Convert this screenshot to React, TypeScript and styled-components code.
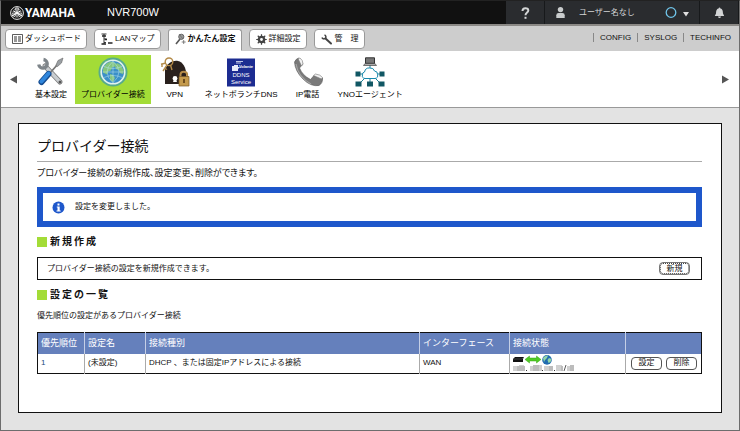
import React from "react";
import styled, { createGlobalStyle } from "styled-components";

const GlobalStyle = createGlobalStyle`
  * { box-sizing: border-box; }
  body {
    margin: 0;
    background: #e3e3e3;
    color: #111;
    font: 8px/12px "Liberation Sans", "Noto Sans CJK JP", sans-serif;
  }
  button { font: inherit; color: inherit; margin: 0; cursor: pointer; }
  h1, h2, p { margin: 0; }
  a { color: inherit; text-decoration: none; }
`;

const Page = styled.div`
  min-height: 100vh;
  border: 1px solid #6d6d6d;
  border-top-color: #222;
`;

const TopBar = styled.header`
  display: flex;
  height: 25px;
  background: #111;
  border-bottom: 2px solid #8b8986;
  color: #fff;
`;

const Brand = styled.div`
  display: flex;
  align-items: center;
  gap: 1px;
  width: 97px;
  padding-left: 9px;
  font: bold 12px/14px Roboto, "Liberation Sans", sans-serif;
`;

const Model = styled.div`
  flex: 1;
  padding-left: 9px;
  font-size: 11px;
  line-height: 22px;
`;

const TopButton = styled.button<{ $wide?: boolean }>`
  display: flex;
  align-items: center;
  justify-content: ${(p) => (p.$wide ? "flex-start" : "center")};
  width: ${(p) => (p.$wide ? "155px" : "39px")};
  padding: 0 ${(p) => (p.$wide ? "6px 0 10px" : "0")};
  border: 0;
  border-right: 1px solid #17191b;
  background: #2a2c2f;
  color: #d3d5d6;
`;

const UserName = styled.span`
  flex: 1;
  padding-left: 13px;
  text-align: left;
`;

const TabBar = styled.div`
  display: flex;
  justify-content: space-between;
  height: 25px;
  padding: 0 8px 0 4px;
  background: #cdcdcd;
`;

const Tabs = styled.nav`
  display: flex;
  align-items: flex-start;
  gap: 7px;
  padding-top: 3px;
`;

const Tab = styled.button<{ $active?: boolean }>`
  display: flex;
  align-items: center;
  gap: 2px;
  height: ${(p) => (p.$active ? "22px" : "20px")};
  padding: 0 5px 0 6px;
  padding-bottom: ${(p) => (p.$active ? "3px" : "0")};
  background: #fff;
  border: 1px solid #999;
  border-bottom-color: ${(p) => (p.$active ? "#fff" : "#999")};
  border-radius: ${(p) => (p.$active ? "3px 3px 0 0" : "4px")};
  font-weight: ${(p) => (p.$active ? "bold" : "normal")};
  white-space: pre;
`;

const Links = styled.nav`
  display: flex;
  align-items: center;
  padding-bottom: 3px;
`;

const TopLink = styled.a`
  padding: 0 6px;
  line-height: 9px;
  border-left: 1px solid #888;
  &:last-child { padding-right: 0; }
`;

const IconBar = styled.nav`
  display: flex;
  align-items: center;
  height: 57px;
  padding: 0 9px 0 8px;
  background: #fff;
  border-bottom: 1px solid #999;
`;

const Arrow = styled.button`
  display: flex;
  padding: 0;
  border: 0;
  background: none;
`;

const Items = styled.div`
  display: flex;
  flex: 1;
  gap: 1px;
  padding-left: 11px;
`;

const Item = styled.a<{ $active?: boolean }>`
  display: flex;
  flex-direction: column;
  align-items: center;
  gap: 2px;
  min-width: 46px;
  height: 49px;
  padding: 2px 6px 0;
  background: ${(p) => (p.$active ? "#a3dc37" : "transparent")};
  color: #000;
`;

const Panel = styled.main`
  margin: 15px 17px 17px;
  padding: 0 19px 38px 18px;
  background: #fff;
  border: 1px solid #111;
`;

const Title = styled.h1`
  padding: 12px 0 5px;
  border-bottom: 1px solid #aaa;
  font-size: 14px;
  font-weight: normal;
  line-height: 20px;
`;

const Description = styled.p`
  padding: 5px 0 8px;
  font-size: 9px;
  font-feature-settings: "palt";
`;

const Notice = styled.div`
  display: flex;
  align-items: center;
  gap: 10px;
  height: 40px;
  padding-left: 9px;
  border: 6px solid #1e57cb;
`;

const Heading = styled.h2`
  display: flex;
  align-items: center;
  gap: 3px;
  padding: 8px 0;
  font-size: 10px;
  line-height: 14px;
  letter-spacing: 2px;
  &::before {
    content: "";
    width: 10px;
    height: 10px;
    background: #a3dc37;
  }
`;

const CreateBox = styled.section`
  display: flex;
  align-items: center;
  justify-content: space-between;
  height: 23px;
  padding: 0 11px 0 9px;
  border: 1px solid #111;
`;

const SmallButton = styled.button<{ $focused?: boolean }>`
  width: 31px;
  height: 13px;
  padding: 0;
  background: #fff;
  border: 1px solid ${(p) => (p.$focused ? "#777" : "#555")};
  border-radius: 4px;
  line-height: 10px;
  outline: ${(p) => (p.$focused ? "1px dotted #444" : "none")};
  outline-offset: -2px;
`;

const ListNote = styled.p`
  padding-bottom: 10px;
`;

const Table = styled.table`
  width: 100%;
  table-layout: fixed;
  border-collapse: collapse;
  border: 1px solid #111;
  text-align: left;
`;

const Col = styled.col<{ $w?: number }>`
  width: ${(p) => (p.$w ? `${p.$w}px` : "auto")};
`;

const Th = styled.th`
  height: 21px;
  padding: 0 3px;
  background: #6580bc;
  color: #fff;
  font-size: 9px;
  font-weight: normal;
  & + & { border-left: 1px solid #c5cfe6; }
`;

const Td = styled.td`
  height: 20px;
  padding: 0 3px;
  vertical-align: middle;
  & + & { border-left: 1px solid #aaa; }
`;

const Serial = styled.span`
  color: #1a4a7c;
`;

const Status = styled.div`
  display: flex;
`;

const Actions = styled.div`
  display: flex;
  gap: 4px;
  justify-content: flex-end;
  padding-right: 1px;
`;

const YamahaMark = () => (
  <svg width="14" height="14" viewBox="0 0 14 14" fill="none" stroke="#fff">
    <circle cx="7" cy="7" r="6.4" strokeWidth=".9" />
    {[0, 120, 240].map((a) => (
      <g key={a} transform={`rotate(${a} 7 7)`}>
        <path d="M7 11V1" strokeWidth=".9" />
        <path d="M5.4 1.8v2.4L7 5.6l1.6-1.4V1.8" strokeWidth=".7" />
      </g>
    ))}
    <circle cx="7" cy="7" r="4.3" strokeWidth=".4" />
  </svg>
);

const HelpIcon = () => (
  <svg width="9" height="12" viewBox="0 0 9 12" fill="none" stroke="#d3d5d6" strokeWidth="2">
    <path d="M1.5 4C1.5 .3 7.3.3 7.3 3.4 7.3 5.5 4.5 5.4 4.5 8.3" />
    <path d="M4.5 9.8v2" />
  </svg>
);

const PersonIcon = () => (
  <svg width="11" height="13" viewBox="0 0 11 13" fill="#c9cccd">
    <circle cx="5.5" cy="3.6" r="2.7" />
    <path d="M1.3 12V9.2Q1.3 7 3.6 7h3.8q2.3 0 2.3 2.2V12z" />
  </svg>
);

const RingIcon = () => (
  <svg width="29" height="12" viewBox="0 0 29 12">
    <circle cx="7" cy="5.5" r="4.8" fill="none" stroke="#70c5ea" strokeWidth="1.3" />
    <path d="M19 5h6l-3 4.5z" fill="#e0e0e0" />
  </svg>
);

const BellIcon = () => (
  <svg width="11" height="12" viewBox="0 0 11 12" fill="#d3d5d6">
    <path d="M5.5.6q.8 0 .9 1C9 2.3 8.8 4.8 9 6.6L10.2 9H.8L2 6.6C2.2 4.8 2 2.3 4.6 1.6q.1-1 .9-1zM4 9.6h3q-.3 1.5-1.5 1.5T4 9.6z" />
  </svg>
);

const DashIcon = () => (
  <svg width="11" height="10" viewBox="0 0 11 10" fill="none" stroke="#333">
    <path d="M.5.5h10v9H.5z" strokeWidth=".8" />
    <path d="M2 3h3M6 3h3M2 5h3M6 5h3M2 7h3M6 7h3" strokeWidth="1.2" />
  </svg>
);

const LanIcon = () => (
  <svg width="12" height="12" viewBox="0 0 12 12" fill="none" stroke="#222">
    <path d="M.5 1h5M3 1v10M3 6h2.5M3 9.5h2" strokeWidth=".9" />
    <path d="M1 3h4M.5 11h4.5M4 6.5h2M7 10h4.500" strokeWidth="1.3" />
  </svg>
);

const WandIcon = () => (
  <svg width="11" height="12" viewBox="0 0 11 12">
    <path d="m1 11 4-5" stroke="#555" strokeWidth="1.6" />
    <circle cx="6.3" cy="3.8" r="2.6" fill="#999" stroke="#666" />
    <path d="M8.7 7v4M6.7 9h4M4 1l4 5" stroke="#666" strokeWidth=".8" />
  </svg>
);

const GearIcon = () => (
  <svg width="11" height="11" viewBox="0 0 10 10" stroke="#444" fill="none">
    <circle cx="5" cy="5" r="2.4" strokeWidth="2.2" />
    {[0, 45, 90, 135].map((a) => (
      <path key={a} d="M5 .2v2M5 7.8v2" strokeWidth="1.1" transform={`rotate(${a} 5 5)`} />
    ))}
  </svg>
);

const WrenchIcon = () => (
  <svg width="12" height="11" viewBox="0 0 12 11" fill="none" stroke="#444">
    <path d="m4.5 4.5 5.5 5" strokeWidth="2" strokeLinecap="round" />
    <path d="M3.5 1A2 2 0 1 1 1 3.5" strokeWidth="1.5" />
  </svg>
);

const Triangle = ({ right }: { right?: boolean }) => (
  <svg width="8" height="9" viewBox="0 0 8 9" fill="#555">
    <path d={right ? "M0 .5v8l7-4z" : "M8 .5v8l-7-4z"} />
  </svg>
);

const ToolsIcon = () => (
  <svg width="30" height="30" viewBox="0 0 30 30" fill="none" strokeLinecap="round">
    <path d="m9 9 15 16" stroke="#777" strokeWidth="5" />
    <path d="m9 9 15 16" stroke="#c9cdd0" strokeWidth="3.4" />
    <path d="M7.5 2.5a4.3 4.3 0 1 1-4.8 5" stroke="#7e858a" strokeWidth="3.3" strokeLinecap="butt" />
    <circle cx="24" cy="25" r="1.5" fill="#555" />
    <path d="m14 16 8-9" stroke="#777" strokeWidth="1.8" />
    <path d="m20 8 2-4.5 5-2.5-1.5 5-4 3.5z" fill="#9a9fa3" stroke="#666" strokeWidth=".6" />
    <path d="m5.500 25 7-8" stroke="#164d91" strokeWidth="6" />
    <path d="m5.500 24.500 7-8" stroke="#2f86dc" strokeWidth="3.8" />
  </svg>
);

const GlobeIcon = () => (
  <svg width="30" height="30" viewBox="0 0 30 30">
    <circle cx="15" cy="15" r="14.5" fill="#57ab8c" />
    <circle cx="15" cy="15" r="12.6" fill="#e2f2ee" />
    <circle cx="15" cy="15" r="11" fill="#3a8fc8" />
    <path d="M5 12Q7 5 14 4.4l4 2-1 3-3 1-1 3-3 1-1 3-4-2zM19 6l4 2 3 6-1 3-3-1-1-3-3-1-1-3zM12 17l3 1 2 3-2 4-3-2z" fill="#86c67f" />
    <path d="M4.5 15h21M15 4.2v21.6M15 4.2q-12 11 0 21.6 12-11 0-21.6M6 9.5q9 4 18 0M6 20.5q9-4 18 0" fill="none" stroke="#b9e4ef" strokeWidth=".5" />
  </svg>
);

const VpnIcon = () => (
  <svg width="30" height="30" viewBox="0 0 30 30">
    <path d="M5 27V13C7 6 13 3 18 4c5 1 8 7 8 12v11z" fill="#29201d" />
    <circle cx="15" cy="21.5" r="2.4" fill="#fff" />
    <path d="m13 25 2-5 2 5z" fill="#fff" />
    <g fill="none" stroke="#b48b49" strokeWidth="1.4">
      <circle cx="9" cy="4.800" r="3.800" />
      <path d="m6 6-5 1.200M2 7v3M7 8l-4 6M4.500 11l2.500 1.500M10.500 8l1.500 5" />
      <path d="M20.500 20v-2.500q0-2.800 3.300-2.800t3.300 2.800V20" strokeWidth="2" />
    </g>
    <path d="M19 19.5h10V29H19z" fill="#c49a4c" stroke="#79592a" strokeWidth=".7" />
    <path d="M24 22v4" stroke="#604018" strokeWidth="1.7" />
  </svg>
);

const DdnsIcon = () => (
  <svg width="30" height="30" viewBox="0 0 30 30">
    <path d="M1 1.5h28v28H1z" fill="#1c2c91" />
    <path d="M6 9h2V8h4v2h2l-2 2v2H6z" fill="#e7ebfa" />
    <path d="M10 4.500h7M10 6h5" stroke="#e7ebfa" strokeWidth=".8" />
    <g fill="#fff" fontFamily="Liberation Sans" textAnchor="middle">
      <text x="20" y="11" fontSize="4" fontWeight="bold">Volante</text>
      <text x="15" y="20" fontSize="6">DDNS</text>
      <text x="15" y="27" fontSize="6">Service</text>
    </g>
  </svg>
);

const PhoneIcon = () => (
  <svg width="30" height="30" viewBox="0 0 30 30">
    <path d="M1.5 5Q3 1.5 6 1l4 6-3.500 4q3 7.500 11 11.500l3.500-4 8.500 2.500q.5 5-3.500 7.500-8 1.500-16-6.500T1.500 5z" fill="#7a7a7a" stroke="#555" strokeWidth=".6" />
    <path d="m5 1.500 2-.5q3 2 3 6L8.500 9zM20.500 18.500l2-1.500q5 .5 7 3.500L28.500 22z" fill="#f2f2f2" stroke="#777" strokeWidth=".6" />
    <path d="M3 7q2 13 15 20" fill="none" stroke="#a5a5a5" strokeWidth="1.2" />
  </svg>
);

const YnoIcon = () => (
  <svg width="30" height="30" viewBox="0 0 30 30">
    <path d="M15 7v5M4 17h6M20 17h6M11 20l-7 7M15 20v6M19 20l7 7" stroke="#1d8299" strokeWidth="1" />
    <path d="M10 21.500q-3.500-.5-2.500-3.600-.5-2.400 2-2.900 1-4.500 5-4 4-.5 5 3 3.500.5 3 3.500 1 3.500-2.500 4z" fill="#fff" stroke="#1689ad" />
    <path d="M10.500.8h9v5.500h-9z" fill="#777" stroke="#333" />
    <path d="m10 6.500-1.500 2h13l-1.500-2z" fill="#aaa" stroke="#333" strokeWidth=".6" />
    <path d="M.5 14.500h5v5h-5zM24.500 14.500h5v5h-5zM.5 24.500h6v5h-6zM12 24.500h6v5h-6zM23.500 24.500h6v5h-6z" fill="#115764" />
  </svg>
);

const InfoIcon = () => (
  <svg width="13" height="13" viewBox="0 0 13 13">
    <circle cx="6.5" cy="6.5" r="6" fill="#1e57cb" />
    <path d="M5.5 2.5h2v2h-2zM4.8 5.5h2.9v4h1v1H4.500v-1h1v-3h-.7z" fill="#fff" />
  </svg>
);

const ConnectionIcon = () => (
  <svg width="64" height="17" viewBox="0 0 64 17" role="img" aria-label="接続中">
    <path d="m0 4 2-2h9l-1 2v3H0z" fill="#111" />
    <path d="M0 4h9l2-2" fill="none" stroke="#666" strokeWidth=".6" />
    <path d="m12 4.500 4.500-3.500v2h7V1L28 4.500 23.500 8V6h-7v2z" fill="#50ca24" stroke="#37a716" strokeWidth=".5" />
    <circle cx="34" cy="4.900" r="4.800" fill="#206bb0" />
    <path d="M30 3q2-3 5-2.500L34 3l-2 2-1 2zM36 3l2.500 1-1 3-2 1-1-3z" fill="#92d6a8" />
    <path d="M0 11h4v5H0zM6 10h5v6H6zM17 11h5v5h-5zM25 10h4v6h-4zM31 11h6v5h-6zM43 10h6v6h-6zM54 11h7v5h-7z" fill="#d0d0d0" />
    <path d="M4 11h8v5H4zM20 10h6v6h-6zM36 11h4v5h-4zM48 11h2v5h-2zM57 10h4v6h-4z" fill="#bcbcbc" />
    <path d="M13 15h1v1h-1zM29 15h1v1h-1zM41 15h1v1h-1z" fill="#333" />
    <path d="m51 16 2-6" stroke="#333" strokeWidth=".8" />
  </svg>
);

const tabs = [
  { label: "ダッシュボード", icon: <DashIcon /> },
  { label: "LANマップ", icon: <LanIcon /> },
  { label: "かんたん設定", icon: <WandIcon />, active: true },
  { label: "詳細設定", icon: <GearIcon /> },
  { label: "管　理", icon: <WrenchIcon /> },
];

const items = [
  { label: "基本設定", icon: <ToolsIcon /> },
  { label: "プロバイダー接続", icon: <GlobeIcon />, active: true },
  { label: "VPN", icon: <VpnIcon /> },
  { label: "ネットボランチDNS", icon: <DdnsIcon /> },
  { label: "IP電話", icon: <PhoneIcon /> },
  { label: "YNOエージェント", icon: <YnoIcon /> },
];

export default function App() {
  return (
    <Page>
      <GlobalStyle />
      <TopBar>
        <Brand><YamahaMark />YAMAHA</Brand>
        <Model>NVR700W</Model>
        <TopButton aria-label="ヘルプ"><HelpIcon /></TopButton>
        <TopButton $wide>
          <PersonIcon />
          <UserName>ユーザー名なし</UserName>
          <RingIcon />
        </TopButton>
        <TopButton aria-label="通知"><BellIcon /></TopButton>
      </TopBar>
      <TabBar>
        <Tabs>
          {tabs.map((t) => (
            <Tab key={t.label} $active={t.active}>{t.icon}{t.label}</Tab>
          ))}
        </Tabs>
        <Links>
          <TopLink href="#config">CONFIG</TopLink>
          <TopLink href="#syslog">SYSLOG</TopLink>
          <TopLink href="#techinfo">TECHINFO</TopLink>
        </Links>
      </TabBar>
      <IconBar>
        <Arrow aria-label="前へ"><Triangle /></Arrow>
        <Items>
          {items.map((i) => (
            <Item key={i.label} href="#" $active={i.active}>{i.icon}{i.label}</Item>
          ))}
        </Items>
        <Arrow aria-label="次へ"><Triangle right /></Arrow>
      </IconBar>
      <Panel>
        <Title>プロバイダー接続</Title>
        <Description>プロバイダー接続の新規作成、設定変更、削除ができます。</Description>
        <Notice role="status"><InfoIcon />設定を変更しました。</Notice>
        <Heading>新規作成</Heading>
        <CreateBox>
          <span>プロバイダー接続の設定を新規作成できます。</span>
          <SmallButton $focused>新規</SmallButton>
        </CreateBox>
        <Heading>設定の一覧</Heading>
        <ListNote>優先順位の設定があるプロバイダー接続</ListNote>
        <Table>
          <colgroup>
            <Col $w={47} /><Col $w={61} /><Col /><Col $w={90} /><Col $w={116} /><Col $w={76} />
          </colgroup>
          <thead>
            <tr>
              <Th>優先順位</Th><Th>設定名</Th><Th>接続種別</Th><Th>インターフェース</Th><Th>接続状態</Th><Th aria-label="操作" />
            </tr>
          </thead>
          <tbody>
            <tr>
              <Td><Serial>1</Serial></Td>
              <Td>(未設定)</Td>
              <Td>DHCP 、または固定IPアドレスによる接続</Td>
              <Td>WAN</Td>
              <Td><Status><ConnectionIcon /></Status></Td>
              <Td>
                <Actions>
                  <SmallButton>設定</SmallButton>
                  <SmallButton>削除</SmallButton>
                </Actions>
              </Td>
            </tr>
          </tbody>
        </Table>
      </Panel>
    </Page>
  );
}
